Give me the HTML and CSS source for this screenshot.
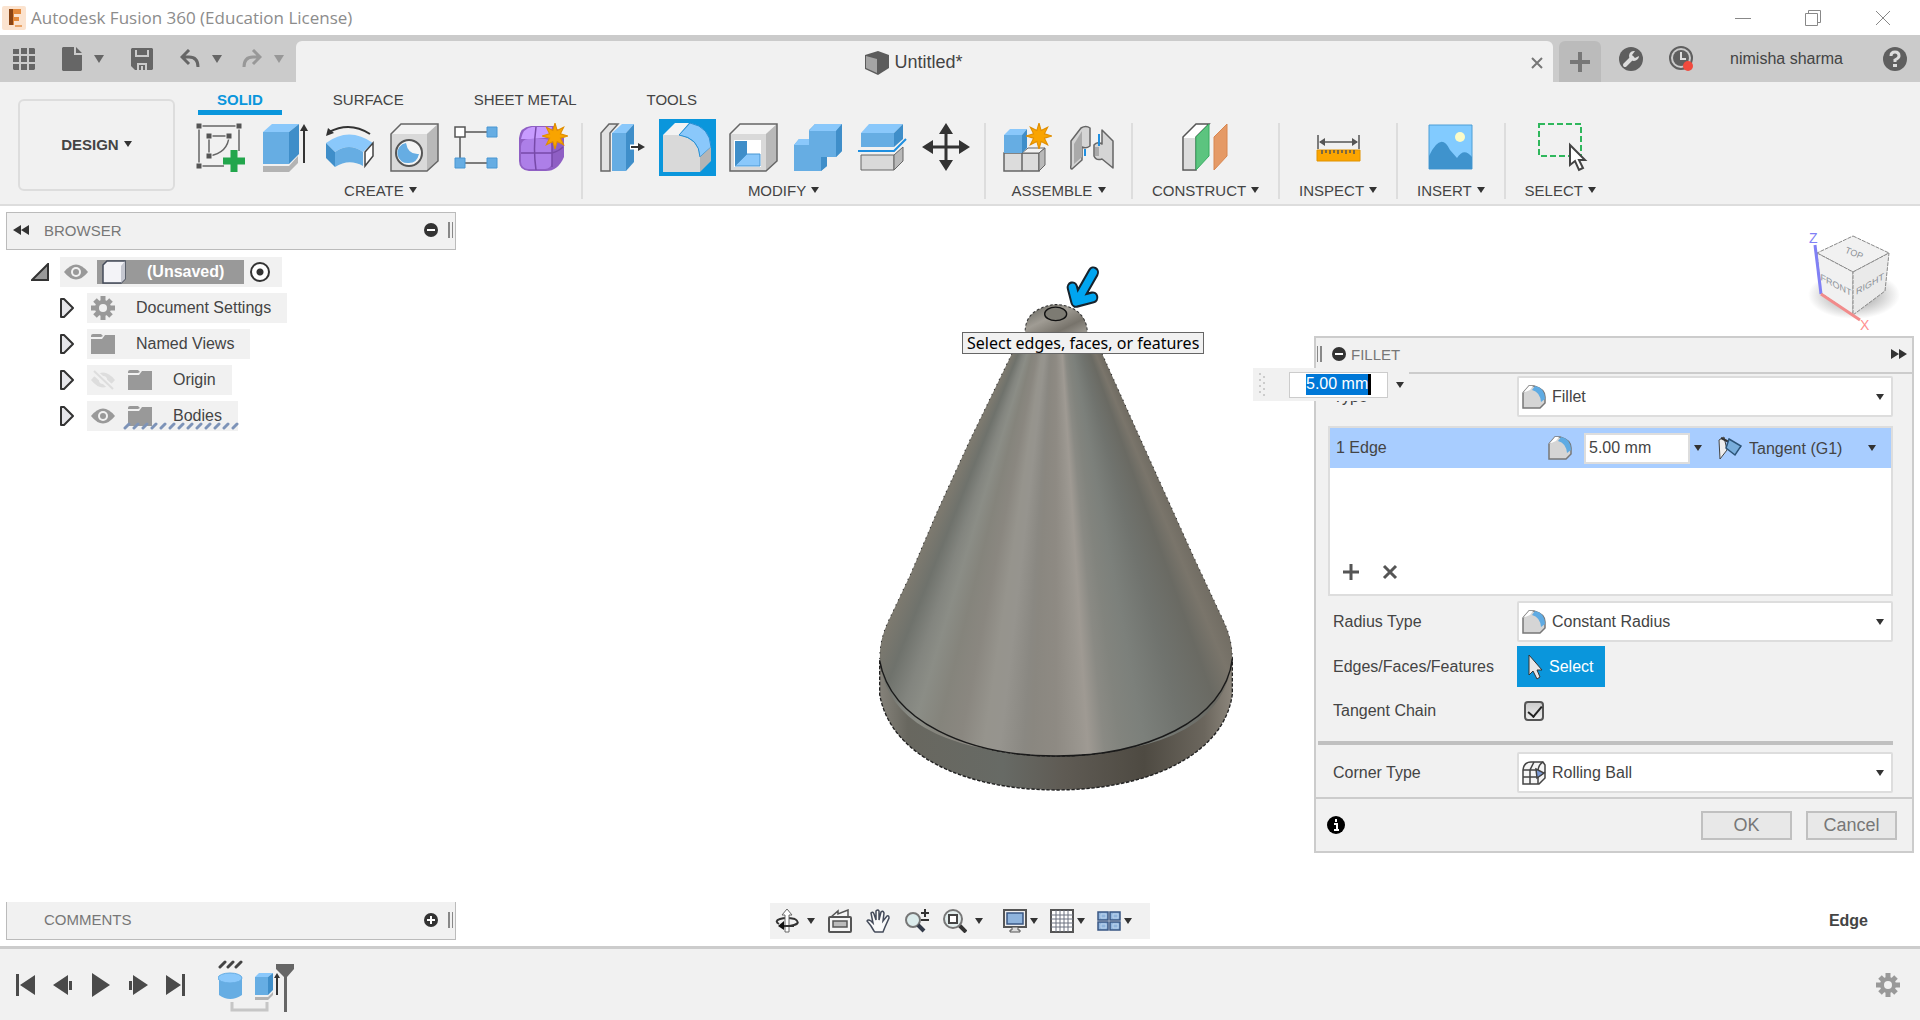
FILE: index.html
```html
<!DOCTYPE html>
<html lang="en">
<head>
    <meta charset="UTF-8">
    <meta name="viewport" content="width=device-width, initial-scale=1.0">
    <title>Autodesk Fusion 360 (Education License)</title>
    <link rel="stylesheet" href="styles.css">
</head>
<body>
    <!-- shared icons -->
    <svg class="defs" width="0" height="0" aria-hidden="true">
        <symbol id="eye" viewBox="0 0 24 18">
            <path d="M0 9 Q12 -6 24 9 Q12 24 0 9Z" fill="#999"/>
            <circle cx="12" cy="9" r="5" fill="#f1f1f1"/>
            <circle cx="12" cy="9" r="3" fill="#999"/>
        </symbol>
        <symbol id="gear" viewBox="0 0 24 24">
            <g stroke="#999" stroke-width="5">
                <path d="M12 0V24M0 12H24M4 4L20 20M20 4L4 20"/>
            </g>
            <circle cx="12" cy="12" r="8" fill="#999"/>
            <circle cx="12" cy="12" r="4" fill="#f1f1f1"/>
        </symbol>
        <symbol id="folder" viewBox="0 0 24 20">
            <path d="M0 2Q0 0 2 0H10L12 2L10 3H0Z" fill="#999"/>
            <path d="M0 5H11L14 1H24V20H0Z" fill="#999"/>
        </symbol>
        <symbol id="node-arrow" viewBox="0 0 14 20">
            <path d="M1 1H4L13 10L4 19H1Z" fill="#e6e6ea" stroke="#333" stroke-width="2" stroke-linejoin="round"/>
        </symbol>
        <symbol id="fillet" viewBox="0 0 24 24">
            <path d="M1 23V8L7 1H12Q23 4 23 12V18L18 23Z" fill="#d5d5d5" stroke="#777" stroke-width="1.5"/>
            <path d="M1 8L7 1H11L8 5Z" fill="#fff"/>
            <path d="M10 5L13 1Q23 3 23 14L19 17Q18 7 10 5Z" fill="#5fabe3"/>
        </symbol>
        <symbol id="star" viewBox="0 0 24 24">
            <path d="M12 0L14 7L20 4L17 10L24 12L17 14L20 20L14 17L12 24L10 17L4 20L7 14L0 12L7 10L4 4L10 7Z" fill="#f9a400" stroke="#e08e00"/>
        </symbol>
        <symbol id="box" viewBox="0 0 57 57">
            <path d="M7 15L17 5H54V42L43 52H7Z" fill="#d9d9d9"/>
            <path d="M7 15L17 5H54L43 15Z" fill="#f3f3f3"/>
            <path d="M43 15L54 5V42L43 52Z" fill="#b9b9b9"/>
            <path d="M7 15L17 5H54V42L43 52H7Z" fill="none" stroke="#666" stroke-width="1.5"/>
        </symbol>
    </svg>

    <header class="titlebar">
        <svg class="logo" viewBox="0 0 24 24" width="24" height="24">
            <rect width="24" height="24" rx="2" fill="#fbe3cf"/>
            <path d="M7 3H19V8H12V11H17V15H12V19H7Z" fill="#e48a3c"/>
            <path d="M7 3H11V19H7Z" fill="#8a4413"/>
            <path d="M13 20H20" stroke="#e9a468" stroke-width="2"/>
        </svg>
        <h1>Autodesk Fusion 360 (Education License)</h1>
        <div class="window-buttons">
            <button type="button" aria-label="Minimize"><svg width="16" height="16"><path d="M0 8.5H16" stroke="#888"/></svg></button>
            <button type="button" aria-label="Restore"><svg width="16" height="16" fill="none" stroke="#888"><path d="M.5 3.5H12.5V15.5H.5ZM3.5 3.5V.5H15.5V12.5H12.5"/></svg></button>
            <button type="button" aria-label="Close window"><svg width="16" height="16"><path d="M1 1L15 15M15 1L1 15" stroke="#888"/></svg></button>
        </div>
    </header>

    <div class="topbar">
        <div class="quick-tools">
            <button type="button" aria-label="Data panel"><svg width="22" height="22" fill="#666"><path d="M0 1H6V6H0ZM8 0H14V6H8ZM16 0H21L22 1V6H16ZM0 8H6V14H0ZM8 8H14V14H8ZM16 8H22V14H16ZM0 16H6V22H1L0 21ZM8 16H14V22H8ZM16 16H22V21L21 22H16Z"/></svg></button>
            <button type="button" class="with-caret" aria-label="File"><svg width="20" height="24" fill="#666"><path d="M1 0H12V8H20V23L19 24H1L0 23V1ZM14 0L20 6H14Z"/></svg><i class="caret wide"></i></button>
            <button type="button" aria-label="Save"><svg width="22" height="22"><path d="M0 1L1 0H21L22 1V21L21 22H4L0 18Z" fill="#666"/><path d="M5 2V8H17V2M7 22V16H15V22M11 18V22" fill="none" stroke="#cbcbcb" stroke-width="2"/></svg></button>
            <div class="history">
                <button type="button" class="with-caret" aria-label="Undo"><svg width="20" height="20" fill="none" stroke="#666" stroke-width="3"><path d="M9 1L2 8L9 15M2 8H9Q18 8 18 18"/></svg><i class="caret wide"></i></button>
                <button type="button" class="with-caret faded" aria-label="Redo"><svg width="20" height="20" fill="none" stroke="#666" stroke-width="3"><path d="M11 1L18 8L11 15M18 8H11Q2 8 2 18"/></svg><i class="caret wide"></i></button>
            </div>
        </div>
        <div class="doc-tab">
            <div class="doc-title">
                <svg width="24" height="24"><path d="M0 4L13 0L24 4V17L13 24L0 18Z" fill="#5c5c5c"/><path d="M1 5L12 8V22L1 17Z" fill="#a5a5a5"/></svg>
                <span>Untitled*</span>
            </div>
            <button type="button" class="close-tab" aria-label="Close tab"><svg width="12" height="12"><path d="M1 1L11 11M11 1L1 11" stroke="#777" stroke-width="2"/></svg></button>
        </div>
        <button type="button" class="new-tab" aria-label="New tab"><svg width="20" height="20"><path d="M10 0V20M0 10H20" stroke="#777" stroke-width="4"/></svg></button>
        <div class="account">
            <button type="button" aria-label="Extensions"><svg width="24" height="24"><circle cx="12" cy="12" r="12" fill="#5f5f5f"/><path d="M6 18L13 11" stroke="#ddd" stroke-width="4" stroke-linecap="round"/><path d="M16 4A5 5 0 1 0 20 9L16 11L13 8Z" fill="#ddd"/></svg></button>
            <button type="button" class="job-status" aria-label="Job status"><svg width="25" height="25"><circle cx="12" cy="12" r="11" fill="none" stroke="#5f5f5f" stroke-width="2"/><circle cx="12" cy="12" r="8" fill="#5f5f5f"/><path d="M12 6V13H17" fill="none" stroke="#ddd" stroke-width="2"/><circle cx="19" cy="20" r="5" fill="#f04a3e"/></svg></button>
            <a href="#" class="user">nimisha sharma</a>
            <button type="button" aria-label="Help"><svg width="24" height="24"><circle cx="12" cy="12" r="12" fill="#5f5f5f"/><path d="M8 9Q8 5 12 5T16 9Q16 11 12 13V15" fill="none" stroke="#ddd" stroke-width="3"/><rect x="10" y="17" width="4" height="3" fill="#ddd"/></svg></button>
        </div>
    </div>

    <div class="ribbon">
        <button type="button" class="workspace">DESIGN <i class="caret"></i></button>
        <div class="ribbon-main">
            <nav class="ribbon-tabs">
                <button type="button" class="active">SOLID</button>
                <button type="button">SURFACE</button>
                <button type="button">SHEET METAL</button>
                <button type="button">TOOLS</button>
            </nav>
            <div class="groups">
                <div class="group">
                    <div class="icons">
                        <button type="button" aria-label="Create Sketch"><svg viewBox="0 0 57 57"><path d="M7 7H47V32M7 7V47H32M17 37V17H37M37 17Q36 34 17 37" fill="none" stroke="#666" stroke-width="1.5"/><path d="M4 4h6v6h-6zM44 4h6v6h-6zM4 44h6v6h-6zM14 14h6v6h-6zM34 14h6v6h-6zM14 34h6v6h-6z" fill="#555" stroke="#f1f1f1"/><path d="M42 31V53M31 42H53" stroke="#22a64c" stroke-width="7"/></svg></button>
                        <button type="button" aria-label="Extrude"><svg viewBox="0 0 57 57"><path d="M7 47H33L42 37V44L33 53H7Z" fill="#b3b3b3"/><path d="M7 13L16 5H43L33 13Z" fill="#8ac8fb"/><path d="M7 13H33V45H7Z" fill="#66ade3"/><path d="M33 13L43 5V35L33 45Z" fill="#3f8ec9"/><path d="M48 9V44" stroke="#333" stroke-width="2"/><path d="M44 12L48 5L52 12Z" fill="#333"/></svg></button>
                        <button type="button" aria-label="Revolve"><svg viewBox="0 0 57 57"><path d="M6 24Q29 7 53 24L43 33Q29 23 15 33Z" fill="#8ac8fb"/><path d="M15 33Q29 23 43 33V47Q29 39 15 48Z" fill="#66ade3"/><path d="M6 24L15 33V48L6 39Z" fill="#3f8ec9"/><path d="M45 33L53 24V37L45 47Z" fill="#fff" stroke="#444" stroke-width="1.5"/><path d="M50 15Q30 2 9 13" fill="none" stroke="#333" stroke-width="2"/><path d="M6 17L8 9L14 14Z" fill="#333"/></svg></button>
                        <button type="button" aria-label="Hole"><svg viewBox="0 0 57 57"><use href="#box"/><circle cx="25" cy="34" r="13" fill="#f5f5f5" stroke="#555" stroke-width="2"/><path d="M22 24Q24 36 35 35Q33 44 25 44A10 10 0 0 1 22 24Z" fill="#66ade3"/></svg></button>
                        <button type="button" aria-label="Pattern"><svg viewBox="0 0 57 57"><path d="M12 13H44M12 13V44H44" fill="none" stroke="#555" stroke-width="1.5"/><path d="M7 8h10v10h-10z" fill="#fff" stroke="#555" stroke-width="1.5"/><path d="M39 8h10v10h-10zM39 39h10v10h-10zM7 39h10v10h-10z" fill="#66ade3" stroke="#4896d2"/></svg></button>
                        <button type="button" aria-label="Create Form"><svg viewBox="0 0 57 57"><path d="M7 19Q8 8 19 7H43L52 19V38Q46 52 34 52H17Q7 51 7 42Z" fill="#8f5fc4"/><path d="M9 20Q11 9 20 8H40L38 18Q28 20 9 20Z" fill="#c79bff"/><rect x="9" y="20" width="31" height="30" rx="7" fill="#ad7fe8"/><path d="M24 8Q21 30 24 51M9 34H40Q47 32 51 28M40 22V48" fill="none" stroke="#774aa8" stroke-width="1.5"/><use href="#star" x="30" y="4" width="26" height="26"/></svg></button>
                    </div>
                    <button type="button" class="group-label">CREATE <i class="caret"></i></button>
                </div>
                <span class="sep"></span>
                <div class="group">
                    <div class="icons">
                        <button type="button" aria-label="Press Pull"><svg viewBox="0 0 57 57"><path d="M15 52H6V14L14 5H23L15 14Z" fill="#e2e2e2" stroke="#666" stroke-width="1.5"/><path d="M17 14L27 5H39L31 14Z" fill="#8ac8fb"/><path d="M17 14H31V52H17Z" fill="#66ade3"/><path d="M31 14L39 5V43L31 52Z" fill="#3f8ec9"/><path d="M35 28H45" stroke="#fff" stroke-width="5"/><path d="M36 28H46" stroke="#333" stroke-width="2"/><path d="M43 24L50 28L43 32Z" fill="#333"/></svg></button>
                        <button type="button" class="current" aria-label="Fillet"><svg viewBox="0 0 57 57"><path d="M4 16L16 4H30L20 16Z" fill="#f3f3f3"/><path d="M4 16H20Q40 20 41 38V53H4Z" fill="#d9d9d9"/><path d="M20 16L31 4Q51 8 52 28L41 38Q40 19 20 16Z" fill="#8ac8fb" stroke="#2a8fd3"/><path d="M41 38L52 28V42L41 53Z" fill="#b5b5b5"/></svg></button>
                        <button type="button" aria-label="Shell"><svg viewBox="0 0 57 57"><use href="#box"/><path d="M11 21H38V48H11Z" fill="#fff"/><path d="M12 22H24V35L12 47Z" fill="#3f8ec9"/><path d="M24 35H37V47H12Z" fill="#8ac8fb" stroke="#4896d2"/></svg></button>
                        <button type="button" aria-label="Combine"><svg viewBox="0 0 57 57"><path d="M7 26L12 20H22V11L28 5H55V32L49 38H40V47L34 52H7Z" fill="#66ade3"/><path d="M22 12L28 5H55L49 12ZM7 26L12 20H22V26Z" fill="#8ac8fb"/><path d="M49 12L55 5V32L49 38ZM34 38H40V47L34 52Z" fill="#3f8ec9"/></svg></button>
                        <button type="button" aria-label="Split Body"><svg viewBox="0 0 57 57"><path d="M10 14L18 5H52L43 14Z" fill="#8ac8fb"/><path d="M10 14H43V28H10Z" fill="#66ade3"/><path d="M43 14L52 5V20L43 28Z" fill="#3f8ec9"/><path d="M7 32H43L55 20" fill="none" stroke="#1f8fe0" stroke-width="2"/><path d="M10 36H43V51H10Z" fill="#d9d9d9" stroke="#666"/><path d="M43 36L52 28V42L43 51Z" fill="#b9b9b9" stroke="#666"/></svg></button>
                        <button type="button" aria-label="Move"><svg viewBox="0 0 57 57" fill="#333"><path d="M31 12V44M15 28H47" stroke="#333" stroke-width="3"/><path d="M31 4L38 15H24ZM31 52L38 41H24ZM7 28L18 21V35ZM55 28L44 21V35Z"/></svg></button>
                    </div>
                    <button type="button" class="group-label">MODIFY <i class="caret"></i></button>
                </div>
                <span class="sep"></span>
                <div class="group">
                    <div class="icons">
                        <button type="button" aria-label="New Component"><svg viewBox="0 0 57 57"><path d="M6 34H24V52H6ZM24 34H41V52H24Z" fill="#dcdcdc" stroke="#666" stroke-width="1.5"/><path d="M24 34L30 29H47L41 34Z" fill="#f3f3f3" stroke="#666"/><path d="M41 34L47 29V46L41 52Z" fill="#b9b9b9" stroke="#666"/><path d="M6 16L12 10H29L24 16Z" fill="#8ac8fb"/><path d="M6 16H24V34H6Z" fill="#66ade3"/><path d="M24 16L29 10V29L24 34Z" fill="#3f8ec9"/><use href="#star" x="28" y="4" width="26" height="26"/></svg></button>
                        <button type="button" aria-label="Joint"><svg viewBox="0 0 57 57"><g fill="#d5d5d5" stroke="#666" stroke-width="1.5" stroke-linejoin="round"><path d="M9 22L19 9Q24 6 28 9V27Q24 30 20 28V41L10 50Q8 50 9 46Z"/><path d="M40 11L51 22V49L40 40Q34 42 32 37V26Q35 22 40 25Z"/></g><path d="M20 12V38L12 45V25ZM33 28H37V37H33Z" fill="#aaa"/><path d="M23 30V37M37 15V27" stroke="#1f8fe0" stroke-width="2"/></svg></button>
                    </div>
                    <button type="button" class="group-label">ASSEMBLE <i class="caret"></i></button>
                </div>
                <span class="sep"></span>
                <div class="group single">
                    <div class="icons">
                        <button type="button" aria-label="Offset Plane"><svg viewBox="0 0 57 57"><path d="M6 18L19 5H32L19 18V51H6Z" fill="#fff" stroke="#555" stroke-width="1.5"/><path d="M7 19H18V50H7Z" fill="#dcdcdc"/><path d="M19 18L32 5V37L19 51Z" fill="#5cc47f" stroke="#36ad60"/><path d="M37 18L50 5V37L37 51Z" fill="#e59a66" stroke="#d88650"/></svg></button>
                    </div>
                    <button type="button" class="group-label">CONSTRUCT <i class="caret"></i></button>
                </div>
                <span class="sep"></span>
                <div class="group single">
                    <div class="icons">
                        <button type="button" aria-label="Measure"><svg viewBox="0 0 57 57"><path d="M7 31H50V42H7Z" fill="#fba500" stroke="#e09200"/><path d="M8 16V30M49 16V30M10 23H47M12 31V35M16 31V34M20 31V35M24 31V34M28 31V35M32 31V34M36 31V35M40 31V34M44 31V35" stroke="#555" stroke-width="1.5"/><path d="M9 23L15 19V27ZM48 23L42 19V27Z" fill="#555"/></svg></button>
                    </div>
                    <button type="button" class="group-label">INSPECT <i class="caret"></i></button>
                </div>
                <span class="sep"></span>
                <div class="group single">
                    <div class="icons">
                        <button type="button" aria-label="Insert Image"><svg viewBox="0 0 57 57"><path d="M7 6H50V50H7Z" fill="#82cbff" stroke="#4d9ed6"/><path d="M7 37Q19 12 28 31L35 39Q42 28 50 38V50H7Z" fill="#3f93cd"/><circle cx="38" cy="18" r="5" fill="#fbfbc8"/></svg></button>
                    </div>
                    <button type="button" class="group-label">INSERT <i class="caret"></i></button>
                </div>
                <span class="sep"></span>
                <div class="group single">
                    <div class="icons">
                        <button type="button" aria-label="Window Select"><svg viewBox="0 0 57 57"><path d="M7 5H49V37H7Z" fill="none" stroke="#2fb75c" stroke-width="2" stroke-dasharray="6 3"/><path d="M38 26V46L43 42L47 51L51 49L47 41H53Z" fill="#fff" stroke="#444" stroke-width="2"/></svg></button>
                    </div>
                    <button type="button" class="group-label">SELECT <i class="caret"></i></button>
                </div>
            </div>
        </div>
    </div>

    <main class="canvas">
        <!-- cone body -->
        <svg class="model" viewBox="-13 0 1200 1530" width="400" height="546" preserveAspectRatio="none">
            <defs>
                <clipPath id="coneClip"><path d="M480 230L455 290L330 530L232 730L150 910L84 1040Q58 1090 58 1140Q75 1405 587 1418Q1100 1405 1116 1140Q1116 1090 1090 1040L1000 860L860 570L725 290L695 230Z"/></clipPath>
                <linearGradient id="rim">
                    <stop offset="0" stop-color="#85827a"/>
                    <stop offset=".08" stop-color="#68675f"/>
                    <stop offset=".35" stop-color="#676a65"/>
                    <stop offset=".52" stop-color="#5f5b54"/>
                    <stop offset=".75" stop-color="#4e4a42"/>
                    <stop offset=".92" stop-color="#6b665d"/>
                    <stop offset="1" stop-color="#8c867c"/>
                </linearGradient>
                <linearGradient id="knob" x2="1" y2="1">
                    <stop offset=".1" stop-color="#6f6e67"/>
                    <stop offset=".4" stop-color="#a09c94"/>
                    <stop offset=".7" stop-color="#77736b"/>
                    <stop offset="1" stop-color="#a8a59e"/>
                </linearGradient>
            </defs>
            <path d="M58 1150V1245C90 1420 320 1513 587 1513S1090 1420 1116 1245V1140C1095 1320 860 1418 587 1418S90 1320 58 1150Z" fill="url(#rim)" stroke="#222" stroke-width="4" stroke-dasharray="10 5"/>
            <g clip-path="url(#coneClip)">
                <foreignObject x="-13" y="24" width="1200" height="1500"><div class="cone-shade"></div></foreignObject>
            </g>
            <path d="M455 290L330 530L232 730L150 910L84 1040Q58 1090 58 1150M725 290L860 570L1000 860L1090 1040Q1116 1090 1116 1150" fill="none" stroke="#333" stroke-width="3" stroke-dasharray="4 12"/>
            <path d="M58 1150C90 1320 320 1418 587 1418S1095 1320 1116 1145" fill="none" stroke="#1a1a1a" stroke-width="4"/>
            <path d="M495 240Q490 190 530 169Q587 138 643 167Q683 190 681 240Z" fill="url(#knob)" stroke="#333" stroke-width="3" stroke-dasharray="8 6"/>
            <ellipse cx="586" cy="179" rx="33" ry="19" fill="#7d7b73" stroke="#111" stroke-width="4"/>
            <g fill="none" stroke-linecap="round" stroke-linejoin="round">
                <path d="M699 63L652 140M636 105L647 145L697 133" stroke="#16222c" stroke-width="34"/>
                <path d="M642 162L634 130L675 140Z" fill="#16222c"/>
                <path d="M699 63L652 140M636 105L647 145L697 133" stroke="#00a5f0" stroke-width="22"/>
            </g>
        </svg>
        <div class="hint">Select edges, faces, or features</div>

        <svg class="view-cube" viewBox="0 0 100 120" width="100" height="120">
            <defs><radialGradient id="shadow"><stop offset=".4" stop-color="#bbb"/><stop offset="1" stop-color="#fff"/></radialGradient></defs>
            <ellipse cx="54" cy="68" rx="46" ry="24" fill="url(#shadow)"/>
            <g fill="#f1f1f1" stroke="#888" stroke-dasharray="4 1">
                <path d="M53 9L89 26L53 45L17 26Z"/>
                <path d="M17 26L53 45V88L21 66Z"/>
                <path d="M53 45L89 26L85 64L53 88Z" fill="#eaeaea"/>
            </g>
            <path d="M15 18L21 67" stroke="#8080f5" stroke-width="3"/>
            <path d="M21 67L60 93" stroke="#f28b8b" stroke-width="3"/>
            <text x="9" y="16" font-size="14" fill="#8080f5">Z</text>
            <text x="60" y="103" font-size="14" fill="#ff9090">X</text>
            <g font-size="9" fill="#8b9096" text-anchor="middle">
                <text transform="translate(36 61) skewY(28)">FRONT</text>
                <text transform="translate(70 60) skewY(-30)">RIGHT</text>
                <text transform="translate(53 29) rotate(22)">TOP</text>
            </g>
        </svg>

        <section class="browser">
            <div class="panel-bar">
                <svg width="16" height="10" fill="#333"><path d="M8 0V10L0 5ZM16 0V10L8 5Z"/></svg>
                <h2>BROWSER</h2>
                <svg width="14" height="14"><circle cx="7" cy="7" r="7" fill="#333"/><path d="M3 7H11" stroke="#fff" stroke-width="2"/></svg>
                <span class="grip"></span>
            </div>
            <ul class="tree">
                <li class="root">
                    <svg width="18" height="18"><path d="M1 17L17 1V17Z" fill="#999" stroke="#333" stroke-width="2"/></svg>
                    <div class="node">
                        <svg width="24" height="18"><use href="#eye"/></svg>
                        <span class="doc-name"><svg width="24" height="24"><path d="M1 5L5 1H23V19L19 23H1Z" fill="#f3f3f7" stroke="#444b5a" stroke-width="1.5"/><path d="M19 6L23 1V19L19 23Z" fill="#c5c7d0"/></svg>(Unsaved)</span>
                        <input type="radio" checked aria-label="Activate component">
                    </div>
                </li>
                <li><svg width="14" height="20"><use href="#node-arrow"/></svg><div class="node"><svg width="24" height="24"><use href="#gear"/></svg><span>Document Settings</span></div></li>
                <li><svg width="14" height="20"><use href="#node-arrow"/></svg><div class="node"><svg width="24" height="20"><use href="#folder"/></svg><span>Named Views</span></div></li>
                <li><svg width="14" height="20"><use href="#node-arrow"/></svg><div class="node"><svg width="24" height="20"><path d="M0 10Q12 -5 24 10Q12 25 0 10Z" fill="#ddd"/><circle cx="12" cy="10" r="4" fill="#f1f1f1"/><path d="M2 1L22 19" stroke="#f1f1f1" stroke-width="6"/><path d="M3 1L22 19" stroke="#ddd" stroke-width="2"/></svg><svg width="24" height="20"><use href="#folder"/></svg><span>Origin</span></div></li>
                <li><svg width="14" height="20"><use href="#node-arrow"/></svg><div class="node hatched"><svg width="24" height="18"><use href="#eye"/></svg><svg width="24" height="20"><use href="#folder"/></svg><span>Bodies</span>
                    <svg class="hatch" width="116" height="8"><defs><pattern id="dash" width="9" height="8" patternUnits="userSpaceOnUse"><path d="M2 6L6 2" stroke="#7d93b8" stroke-width="3" stroke-linecap="round"/></pattern></defs><rect width="116" height="8" fill="url(#dash)"/></svg></div></li>
            </ul>
        </section>

        <form class="dialog">
            <div class="dialog-head">
                <span class="grip"></span>
                <svg width="14" height="14"><circle cx="7" cy="7" r="7" fill="#333"/><path d="M3 7H11" stroke="#fff" stroke-width="2"/></svg>
                <h2>FILLET</h2>
                <svg width="16" height="10" fill="#333"><path d="M0 0V10L8 5ZM8 0V10L16 5Z"/></svg>
            </div>
            <div class="dialog-body">
                <div class="field">
                    <label for="type">Type</label>
                    <div class="combo"><svg width="24" height="24"><use href="#fillet"/></svg><select id="type"><option>Fillet</option></select><i class="caret"></i></div>
                </div>
                <div class="edge-list">
                    <div class="edge-row">
                        <label for="radius">1 Edge</label>
                        <svg width="24" height="24"><use href="#fillet"/></svg>
                        <input type="text" id="radius" value="5.00 mm">
                        <i class="caret"></i>
                        <svg width="24" height="24"><path d="M1 4L6 1L9 14L2 23Z" fill="#eee" stroke="#444"/><path d="M3 2L9 5L23 11" fill="none" stroke="#333" stroke-width="2"/><path d="M11 3L23 10L17 19L8 12Z" fill="#79aedc" stroke="#2c5478" stroke-width="1.5"/></svg>
                        <select aria-label="Continuity"><option>Tangent (G1)</option></select>
                        <i class="caret"></i>
                    </div>
                    <div class="edge-actions">
                        <button type="button" aria-label="Add selection"><svg width="16" height="16"><path d="M8 0V16M0 8H16" stroke="#555" stroke-width="3"/></svg></button>
                        <button type="button" aria-label="Remove selection"><svg width="16" height="16"><path d="M2 2L14 14M14 2L2 14" stroke="#555" stroke-width="3"/></svg></button>
                    </div>
                </div>
                <div class="field">
                    <label for="radius-type">Radius Type</label>
                    <div class="combo"><svg width="24" height="24"><use href="#fillet"/></svg><select id="radius-type"><option>Constant Radius</option></select><i class="caret"></i></div>
                </div>
                <div class="field">
                    <label for="pick">Edges/Faces/Features</label>
                    <button type="button" id="pick" class="pick"><svg width="15" height="26"><path d="M1 1V21L5 17L9 25L12 23L9 16H14Z" fill="#e8e8e8" stroke="#333"/></svg>Select</button>
                </div>
                <div class="field chain">
                    <label for="chain">Tangent Chain</label>
                    <input type="checkbox" id="chain" checked>
                </div>
                <hr>
                <div class="field">
                    <label for="corner">Corner Type</label>
                    <div class="combo"><svg width="24" height="24" fill="#f5f5f5" stroke="#444" stroke-width="1.5"><path d="M1 9Q2 1 9 1H21L23 4V17L17 23H1Z"/><path d="M1 9H16Q17 3 21 1M16 9V23M1 16H16L23 11M8 23V9L12 1" fill="none"/><path d="M14 8L22 12L15 17Z" fill="#7b9bd8"/></svg><select id="corner"><option>Rolling Ball</option></select><i class="caret"></i></div>
                </div>
            </div>
            <div class="dialog-foot">
                <svg width="20" height="20"><circle cx="10" cy="10" r="9" fill="#000"/><path d="M10 4V7M8 9H11V15M8 15H13" fill="none" stroke="#fff" stroke-width="2"/></svg>
                <button type="button">OK</button>
                <button type="button">Cancel</button>
            </div>
        </form>

        <!-- in-canvas value box -->
        <div class="value-box">
            <svg width="8" height="28" fill="#ccc"><path d="M0 2h2v2h-2zM4 5h2v2h-2zM0 8h2v2h-2zM4 11h2v2h-2zM0 14h2v2h-2zM4 17h2v2h-2zM0 20h2v2h-2zM4 23h2v2h-2z"/></svg>
            <div class="value-field"><input type="text" value="5.00 mm" aria-label="Fillet radius"></div>
            <i class="caret"></i>
        </div>

        <div class="canvas-foot">
            <div class="panel-bar comments">
                <h2>COMMENTS</h2>
                <svg width="14" height="14"><circle cx="7" cy="7" r="7" fill="#333"/><path d="M3 7H11M7 3V11" stroke="#fff" stroke-width="2"/></svg>
                <span class="grip"></span>
            </div>
            <div class="navbar">
                <button type="button" class="with-caret" aria-label="Orbit"><svg width="24" height="24" fill="none"><path d="M20 10Q26 14 19 16Q12 18 6 17M4 15Q-1 12 5 10Q11 8 20 10" stroke="#333" stroke-width="2"/><path d="M10 23V6H7L12 0L17 6H14V23Z" fill="#fff" stroke="#666"/><path d="M5 17H19" stroke="#333" stroke-width="2"/><path d="M9 12V21L3 17Z" fill="#111"/></svg><i class="caret"></i></button>
                <button type="button" aria-label="Look At"><svg width="24" height="24" fill="#f5f5f5" stroke="#555"><path d="M3 8L10 2V5L20 1V8Z" stroke-width="1.5"/><rect x="1" y="8" width="22" height="15" rx="1" stroke-width="2"/><rect x="5" y="12" width="14" height="6" fill="#bbb" stroke-width="1.5"/></svg></button>
                <button type="button" aria-label="Pan"><svg width="24" height="24"><path d="M8 22L5 17L1 12Q2 10 5 12L7 14L5 4Q7 2 8 5L10 11V2Q12 0 13 2V11L15 3Q17 1 18 4L17 12L21 7Q23 6 23 9L19 18L17 23H9Z" fill="#fafafa" stroke="#444b5a" stroke-width="1.5"/></svg></button>
                <button type="button" aria-label="Zoom"><svg width="26" height="24"><circle cx="9" cy="11" r="7" fill="#dcecec" stroke="#777" stroke-width="2"/><path d="M14 16L20 22" stroke="#333b4a" stroke-width="4"/><path d="M21 0V8M17 4H25M17 11H25" stroke="#333" stroke-width="2"/></svg></button>
                <button type="button" class="with-caret spaced" aria-label="Fit"><svg width="24" height="24"><path d="M16 16L23 23" stroke="#333" stroke-width="4"/><circle cx="10" cy="10" r="9" fill="#e3eeee" stroke="#777" stroke-width="2"/><path d="M6 6H14V14H6Z" fill="#fff" stroke="#444" stroke-width="2"/></svg><i class="caret"></i></button>
                <button type="button" class="with-caret" aria-label="Display Settings"><svg width="24" height="24"><path d="M1 1H23V18H1Z" fill="#eee" stroke="#555" stroke-width="2"/><path d="M4 4H20V15H4Z" fill="#8fb4dd" stroke="#3a5784" stroke-width="1.5"/><path d="M9 18H15V21H17V23H7V21H9Z" fill="#ddd" stroke="#555"/></svg><i class="caret"></i></button>
                <button type="button" class="with-caret" aria-label="Grid Settings"><svg width="24" height="24"><rect x="1" y="1" width="22" height="22" fill="#fff" stroke="#555" stroke-width="2"/><path d="M6 1V23M10 1V23M14 1V23M18 1V23M1 6H23M1 10H23M1 14H23M1 18H23" stroke="#6d7280"/></svg><i class="caret"></i></button>
                <button type="button" class="with-caret" aria-label="Viewports"><svg width="24" height="20" fill="#8fb4dd" stroke="#3a5784"><path d="M1 1H11V9H1ZM13 1H23V9H13ZM1 11H11V19H1ZM13 11H23V19H13Z" stroke-width="1.5"/><path d="M4 3H9V7H4ZM16 3H21V7H16ZM4 13H9V17H4ZM16 13H21V17H16Z" stroke="#bcd3ec"/></svg><i class="caret"></i></button>
            </div>
            <strong class="selection">Edge</strong>
        </div>
    </main>

    <footer class="timeline">
        <div class="playback">
            <button type="button" aria-label="Go to start"><svg width="22" height="24"><path d="M2 1H5V23H2ZM21 2V22L6 12Z"/></svg></button>
            <button type="button" aria-label="Step back"><svg width="22" height="24"><path d="M16 2V22L1 12ZM17 8H20V17H17Z"/></svg></button>
            <button type="button" aria-label="Play"><svg width="22" height="24"><path d="M2 0L20 12L2 24Z"/></svg></button>
            <button type="button" aria-label="Step forward"><svg width="22" height="24"><path d="M5 2V22L20 12ZM1 8H4V17H1Z"/></svg></button>
            <button type="button" aria-label="Go to end"><svg width="22" height="24"><path d="M0 2V22L15 12ZM16 1H19V23H16Z"/></svg></button>
        </div>
        <svg class="features" width="78" height="56" aria-label="Timeline features">
            <path d="M2 10L7 5M10 10L15 5M18 10L23 5" stroke="#444" stroke-width="3" stroke-linecap="round"/>
            <path d="M1 20V38Q12 46 24 38V20Z" fill="#66ade3"/>
            <ellipse cx="12" cy="21" rx="12" ry="5" fill="#8ac8fb" stroke="#66ade3"/>
            <path d="M37 40H50L55 35V38L50 43H37Z" fill="#b3b3b3"/>
            <path d="M37 20L41 16H55L50 20Z" fill="#8ac8fb"/>
            <path d="M37 20H50V38H37Z" fill="#66ade3"/>
            <path d="M50 20L55 16V33L50 38Z" fill="#3f8ec9"/>
            <path d="M59 20V38" stroke="#333" stroke-width="2"/>
            <path d="M56 21L59 16L62 21Z" fill="#333"/>
            <path d="M14 45V53H49V45" fill="none" stroke="#c6c6c6" stroke-width="3"/>
            <path d="M58 7H76V12L69 20V55H66V20L58 12Z" fill="#666"/>
        </svg>
        <button type="button" class="settings" aria-label="Timeline settings"><svg width="24" height="24"><use href="#gear"/></svg></button>
    </footer>
</body>
</html>
```

FILE: styles.css
```css
* {
    box-sizing: border-box;
}

body {
    display: flex;
    flex-direction: column;
    min-height: 100vh;
    margin: 0;
    background-color: #fff;
    color: #444;
    font-family: "Liberation Sans", Arial, sans-serif;
    font-size: 16px;
}

button {
    padding: 0;
    border: none;
    background: none;
    color: inherit;
    font: inherit;
    cursor: pointer;
}

svg {
    display: block;
    flex-shrink: 0;
}

h1, h2 {
    margin: 0;
    font-weight: normal;
}

.defs {
    position: absolute;
}

.caret {
    display: inline-block;
    flex-shrink: 0;
    border: 4px solid transparent;
    border-top: 6px solid #333;
    border-bottom: none;
}

.caret.wide {
    border-width: 8px 5px 0;
    border-top-color: #666;
}

.with-caret {
    display: flex;
    align-items: center;
    gap: 12px;
}

/* title bar */
.titlebar {
    display: flex;
    align-items: center;
    height: 35px;
    padding: 0 2px;
}

.titlebar h1 {
    flex: 1;
    margin-left: 5px;
    font-family: "Open Sans", "Noto Sans", sans-serif;
    font-size: 17px;
    color: #8c8c8c;
}

.window-buttons {
    display: flex;
}

.window-buttons button {
    display: flex;
    justify-content: center;
    width: 70px;
}

/* quick tools, document tab, account */
.topbar {
    display: flex;
    align-items: center;
    height: 47px;
    background-color: #cbcbcb;
}

.quick-tools {
    display: flex;
    align-items: center;
    gap: 27px;
    width: 296px;
    padding-left: 13px;
}

.history {
    display: flex;
    gap: 20px;
}

.faded {
    opacity: 0.5;
}

.doc-tab {
    display: flex;
    flex: 1;
    align-items: center;
    align-self: flex-end;
    height: 41px;
    padding: 2px 10px 0 0;
    background-color: #f1f1f1;
    border-radius: 6px 6px 0 0;
}

.doc-title {
    display: flex;
    flex: 1;
    align-items: center;
    justify-content: center;
    gap: 6px;
    font-size: 18px;
}

.new-tab {
    display: flex;
    align-items: center;
    align-self: flex-end;
    justify-content: center;
    width: 42px;
    height: 41px;
    margin-left: 6px;
    background-color: #bbb;
    border-radius: 6px 6px 0 0;
}

.account {
    display: flex;
    align-items: center;
    padding: 0 13px 0 18px;
}

.job-status {
    margin-left: 26px;
}

.user {
    margin: 0 40px 0 36px;
    color: #444;
    text-decoration: none;
}

/* ribbon */
.ribbon {
    display: flex;
    height: 124px;
    background-color: #f1f1f1;
    border-bottom: 2px solid #ddd;
    font-size: 15px;
}

.workspace {
    width: 157px;
    height: 92px;
    margin: 17px 17px 0 18px;
    padding-bottom: 2px;
    border: 2px solid #ddd;
    border-radius: 6px;
    font-weight: bold;
}

.workspace .caret,
.group-label .caret {
    margin: 0 0 3px 1px;
}

.ribbon-tabs {
    display: flex;
    gap: 32px;
    padding-left: 6px;
    margin-bottom: 4px;
}

.ribbon-tabs button {
    height: 33px;
    padding: 6px 19px 0;
    border-bottom: 5px solid transparent;
}

.ribbon-tabs .active {
    border-color: #0a96dc;
    color: #0a96dc;
    font-weight: bold;
}

.groups {
    display: flex;
}

.group {
    display: flex;
    flex-direction: column;
    align-items: center;
    padding: 0 12px;
}

.group:first-child {
    padding-left: 0;
}

.group.single {
    padding: 0 19px;
}

.icons {
    display: flex;
    gap: 7px;
}

.icons button {
    width: 57px;
    height: 57px;
}

.icons .current {
    background-color: #0a96dc;
}

.group-label {
    height: 28px;
    white-space: nowrap;
}

.sep {
    width: 2px;
    height: 76px;
    margin-top: 4px;
    background-color: #ddd;
}

/* canvas */
.canvas {
    position: relative;
    display: flex;
    flex: 1;
    flex-direction: column;
    justify-content: space-between;
    padding: 6px;
}

.model {
    position: absolute;
    top: 44px;
    left: 55%;
    transform: translateX(-50%);
}

.cone-shade {
    width: 1200px;
    height: 1500px;
    background: conic-gradient(from 152deg at 600px 0,
        #6b675e 0deg, #7a756b 4deg, #6a6a63 7deg, #70736e 12deg,
        #7c807b 17deg, #82847e 20deg, #8a8a84 22deg, #9f9a93 24deg,
        #9a968f 25deg, #8e8a83 28deg, #8a8780 31deg, #8a8882 32deg,
        #96948e 35deg, #96948d 37deg, #8a8780 40deg, #85847c 43deg,
        #8b8d86 46deg, #83857f 48deg, #6f726c 51deg, #7c796f 54deg,
        #7c796f 360deg);
}

.hint {
    position: absolute;
    top: 126px;
    left: 962px;
    height: 22px;
    padding: 0 4px;
    border: 1px solid #666;
    background-color: #f1f1f1;
    color: #000;
    font-family: "Noto Sans", sans-serif;
    font-size: 16px;
    line-height: 20px;
    white-space: nowrap;
}

.view-cube {
    position: absolute;
    top: 21px;
    right: 20px;
}

.panel-bar {
    display: flex;
    align-items: center;
    width: 450px;
    height: 38px;
    padding: 0 2px 2px 6px;
    border: 1px solid #bbb;
    background-color: #f1f1f1;
}

.panel-bar h2 {
    flex: 1;
    margin-left: 15px;
    font-size: 15px;
    color: #777;
}

.grip {
    width: 5px;
    height: 16px;
    margin-left: 10px;
    border: solid #888;
    border-width: 0 1px 0 2px;
}

.tree {
    display: flex;
    flex-direction: column;
    gap: 6px;
    margin: 7px 0 0;
    padding: 0 0 0 54px;
    list-style: none;
}

.tree li {
    display: flex;
    align-items: center;
    gap: 13px;
}

.tree .root {
    gap: 11px;
    margin-left: -29px;
}

.node {
    position: relative;
    display: flex;
    align-items: center;
    gap: 13px;
    height: 30px;
    padding: 0 16px 0 4px;
    background-color: #f1f1f1;
}

.root .node {
    padding-right: 12px;
}

.node span {
    margin-left: 8px;
}

.node .doc-name {
    display: flex;
    align-items: center;
    gap: 21px;
    height: 24px;
    margin-left: -4px;
    padding: 0 20px 0 5px;
    background-color: #999;
    color: #fff;
    font-weight: bold;
}

.node input {
    appearance: none;
    width: 20px;
    height: 20px;
    margin: 0 0 0 -7px;
    border: 2px solid #333;
    border-radius: 50%;
    background: radial-gradient(#333 0 3px, #fff 4px);
}

.hatch {
    position: absolute;
    bottom: 1px;
    left: 36px;
}

/* fillet dialog */
.dialog {
    position: absolute;
    top: 130px;
    right: 6px;
    width: 600px;
    border: 2px solid #ccc;
    background-color: #f1f1f1;
}

.dialog-head {
    display: flex;
    align-items: center;
    height: 36px;
    padding: 0 5px 2px 1px;
    border-bottom: 2px solid #ccc;
}

.dialog-head .grip {
    margin: 0 10px 0 0;
    border-width: 0 2px 0 1px;
}

.dialog-head h2 {
    flex: 1;
    margin-left: 5px;
    font-size: 15px;
    color: #777;
}

.dialog-body {
    padding: 2px 19px 4px 12px;
}

.field {
    display: grid;
    grid-template-columns: 184px 1fr;
    align-items: center;
    margin-bottom: 4px;
    padding-left: 5px;
}

.combo {
    display: flex;
    align-items: center;
    height: 41px;
    padding: 0 7px 0 3px;
    border: 2px solid #ddd;
    border-radius: 2px;
    background-color: #fff;
}

select {
    flex: 1;
    appearance: none;
    padding: 0;
    border: none;
    background: none;
    color: inherit;
    font: inherit;
}

.combo select {
    margin-left: 6px;
}

.edge-list {
    display: flex;
    flex-direction: column;
    justify-content: space-between;
    height: 170px;
    margin: 9px 0 5px;
    border: 2px solid #ddd;
    background-color: #fff;
}

.edge-row {
    display: flex;
    align-items: center;
    height: 40px;
    padding: 0 15px 0 6px;
    background-color: #a8cdff;
}

.edge-row label {
    flex: 1;
}

.edge-row input {
    width: 106px;
    height: 31px;
    margin: 0 4px 0 12px;
    padding: 0 3px;
    border: 2px solid #ddd;
    color: inherit;
    font: inherit;
}

.edge-row .caret + svg {
    margin: 0 7px 0 16px;
}

.edge-row select {
    flex: none;
    width: 119px;
}

.edge-actions {
    display: flex;
    gap: 23px;
    padding: 0 13px 14px;
}

.pick {
    display: flex;
    align-items: center;
    gap: 6px;
    width: 88px;
    height: 41px;
    padding-left: 11px;
    background-color: #0a96dc;
    color: #fff;
}

.chain {
    height: 40px;
}

.chain input {
    appearance: none;
    width: 20px;
    height: 20px;
    margin: 0 0 0 7px;
    border: 2px solid #555;
    border-radius: 4px;
    background: linear-gradient(#ccc, #eee);
    position: relative;
}

.chain input:checked::after {
    content: "";
    position: absolute;
    top: 0;
    left: 5px;
    width: 6px;
    height: 12px;
    border: solid #222;
    border-width: 0 2px 2px 0;
    transform: rotate(40deg);
}

hr {
    height: 4px;
    margin: 10px 0 7px -10px;
    border: none;
    background-color: #c0c0c0;
}

.dialog-body .field:last-child {
    margin-bottom: 0;
}

.dialog-foot {
    display: flex;
    align-items: center;
    gap: 14px;
    height: 54px;
    padding: 0 15px 0 10px;
    border-top: 2px solid #ccc;
    font-size: 18px;
    color: #777;
}

.dialog-foot svg {
    margin-right: auto;
}

.dialog-foot button {
    width: 91px;
    height: 29px;
    border: 2px solid #c0c0c0;
    background-color: #e8e8e8;
}

.value-box {
    position: absolute;
    top: 162px;
    right: 511px;
    display: flex;
    align-items: center;
    width: 156px;
    height: 33px;
    padding-left: 6px;
    background-color: #f1f1f1;
}

.value-field {
    display: flex;
    width: 99px;
    height: 26px;
    margin: 0 8px 0 22px;
    padding: 1px 0 2px 16px;
    border: 1px solid #ccc;
    background-color: #fff;
}

.value-field input {
    width: 65px;
    padding: 0;
    border: none;
    border-right: 3px solid #000;
    background-color: #0078d7;
    color: #fff;
    font: inherit;
}

/* bottom of the canvas */
.canvas-foot {
    display: grid;
    grid-template-columns: 1fr auto 1fr;
    align-items: center;
}

.comments {
    border-top: none;
}

.comments h2 {
    margin-left: 31px;
}

.navbar {
    display: flex;
    align-items: center;
    gap: 12px;
    height: 36px;
    padding: 0 18px 0 5px;
    background-color: #f1f1f1;
}

.navbar button {
    padding: 0 1px;
}

.navbar .with-caret {
    gap: 3px;
    padding: 0;
}

.navbar .with-caret:first-child,
.navbar .spaced {
    gap: 8px;
}

.navbar .spaced {
    margin-right: 8px;
}

.selection {
    justify-self: end;
    margin-right: 46px;
}

/* timeline */
.timeline {
    display: flex;
    align-items: center;
    height: 74px;
    padding: 0 20px 0 14px;
    border-top: 3px solid #ccc;
    background-color: #f1f1f1;
}

.playback {
    display: flex;
    gap: 16px;
    fill: #4a4a4a;
}

.features {
    margin-left: 30px;
}

.settings {
    margin-left: auto;
}
```
